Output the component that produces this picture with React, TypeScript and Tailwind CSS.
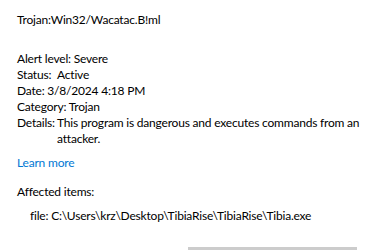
export default function App() {
  return (
    <div className="h-[250px] w-full overflow-hidden bg-white pl-[17px] pr-[6px] font-['Lato',sans-serif] text-[12px] leading-[16px] tracking-[-0.2px] text-black">
      <div className="pt-[12px]">Trojan:Win32/Wacatac.B!ml</div>

      <div className="mt-[23px] flex flex-col">
        <div>Alert level: Severe</div>
        <div className="flex">
          <span className="w-[40px] shrink-0">Status:</span>
          <span>Active</span>
        </div>
        <div>Date: 3/8/2024 4:18 PM</div>
        <div>Category: Trojan</div>
        <div className="flex">
          <span className="w-[40px] shrink-0">Details:</span>
          <span>This program is dangerous and executes commands from an attacker.</span>
        </div>
      </div>

      <a href="#" className="mt-[8px] block w-fit text-[#0078d4]">
        Learn more
      </a>

      <div className="mt-[13px]">Affected items:</div>
      <div className="mt-[8px] pl-[13px]">file: C:\Users\krz\Desktop\TibiaRise\TibiaRise\Tibia.exe</div>

      <div className="mt-[23px] flex justify-end pr-[7px]">
        <button className="h-8 w-[169px] bg-[#cccccc]" />
      </div>
    </div>
  );
}
